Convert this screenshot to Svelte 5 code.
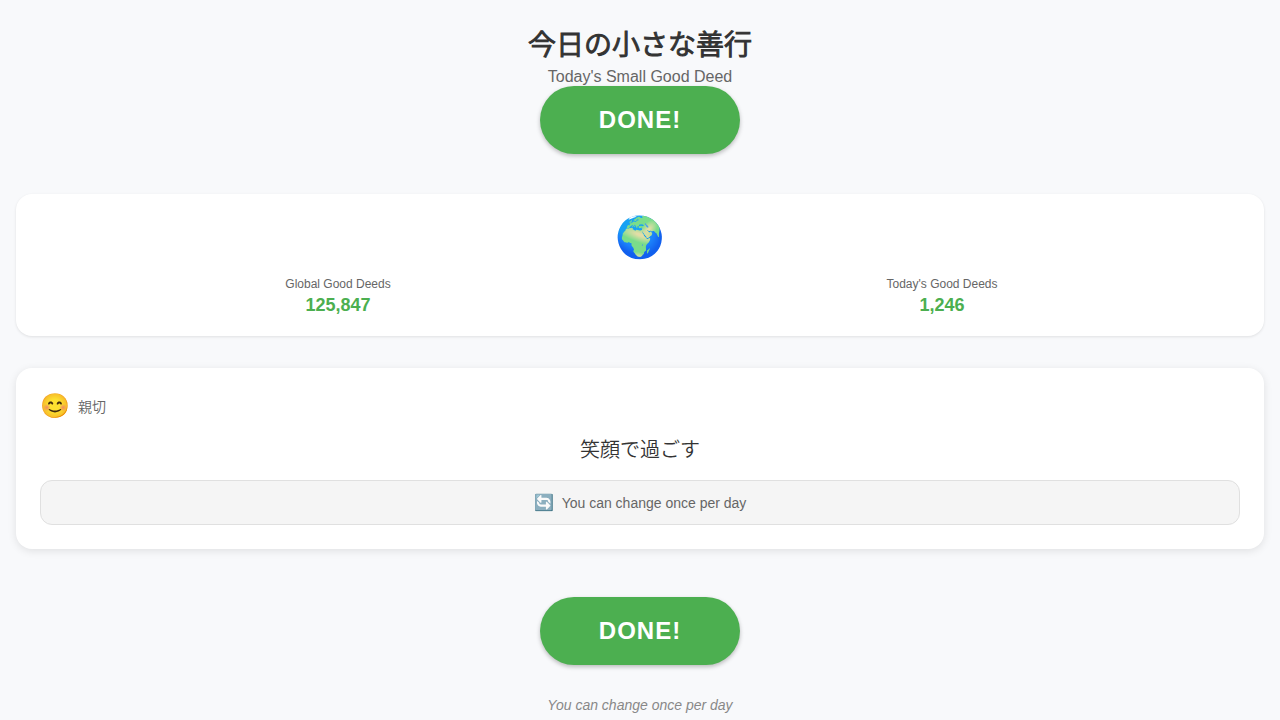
<script>
  let globalCount = $state(125847);
  let todayCount = $state(1246);
  let done = $state(false);

  function complete() {
    if (done) return;
    done = true;
    globalCount += 1;
    todayCount += 1;
  }
  const format = (n) => n.toLocaleString('en-US');
</script>

<main class="page">
  <header class="header">
    <h1 lang="ja">今日の小さな善行</h1>
    <p>Today's Small Good Deed</p>
  </header>

  <button class="done" type="button" onclick={complete}>DONE!</button>

  <section class="card stats">
    <div class="globe">🌍</div>
    <dl class="counts">
      <div class="count">
        <dt>Global Good Deeds</dt>
        <dd>{format(globalCount)}</dd>
      </div>
      <div class="count">
        <dt>Today's Good Deeds</dt>
        <dd>{format(todayCount)}</dd>
      </div>
    </dl>
  </section>

  <section class="card deed">
    <div class="category">
      <span class="face">😊</span>
      <span class="name" lang="ja">親切</span>
    </div>
    <h2 lang="ja">笑顔で過ごす</h2>
    <button class="change" type="button">
      <span class="arrows">🔄</span>
      <span>You can change once per day</span>
    </button>
  </section>

  <div class="bottom">
    <button class="done" type="button" onclick={complete}>DONE!</button>
    <p class="note">You can change once per day</p>
  </div>
</main>

<style>
  :global(body) {
    background: #f8f9fb;
  }
  .page {
    display: flex;
    flex-direction: column;
    align-items: center;
    padding: 24px 16px 0;
    color: #333;
    font-family: "Liberation Sans", "Noto Sans CJK JP", sans-serif;
  }
  h1, h2, p, dl, dd {
    margin: 0;
  }
  .header {
    text-align: center;
  }
  h1 {
    font-size: 28px;
    line-height: 44px;
    font-weight: 350;
    -webkit-text-stroke: 1px currentColor;
  }
  .header p {
    color: #666;
    font-size: 16px;
    line-height: 18px;
  }
  button {
    font-family: inherit;
    cursor: pointer;
  }
  .done {
    min-width: 200px;
    height: 68px;
    border: 0;
    border-radius: 34px;
    background: #4caf50;
    color: #fff;
    font-size: 24px;
    font-weight: 700;
    letter-spacing: 1px;
    box-shadow: 0 2px 4px rgba(0, 0, 0, 0.25);
  }
  .card {
    box-sizing: border-box;
    width: 100%;
    border-radius: 16px;
    background: #fff;
  }
  .stats {
    margin-top: 40px;
    padding: 16px 16px 18px;
    box-shadow: 0 1px 3px rgba(0, 0, 0, 0.1);
  }
  .globe {
    font-size: 40px;
    line-height: 54px;
    text-align: center;
  }
  .counts {
    display: grid;
    grid-template-columns: 1fr 1fr;
    margin-top: 12px;
    padding: 0 4px;
    text-align: center;
  }
  dt {
    color: #666;
    font-size: 12px;
    line-height: 16px;
  }
  dd {
    color: #4caf50;
    font-size: 18px;
    line-height: 26px;
    font-weight: 700;
  }
  .deed {
    margin-top: 32px;
    padding: 24px;
    box-shadow: 0 2px 8px rgba(0, 0, 0, 0.1);
  }
  .category {
    display: flex;
    align-items: center;
    gap: 8px;
  }
  .face {
    font-size: 24px;
    line-height: 28px;
  }
  .name {
    color: #666;
    font-family: "Noto Sans CJK JP", sans-serif;
    font-size: 14px;
    font-weight: 350;
    line-height: 20px;
  }
  h2 {
    margin: 16px 0;
    font-size: 20px;
    line-height: 28px;
    font-weight: 350;
    text-align: center;
  }
  .change {
    display: flex;
    align-items: center;
    justify-content: center;
    gap: 8px;
    width: 100%;
    padding: 12px 12px 11px;
    border: 1px solid #e0e0e0;
    border-radius: 12px;
    background: #f5f5f5;
    color: #666;
    font-size: 14px;
    line-height: 20px;
  }
  .arrows {
    font-size: 16px;
  }
  .bottom {
    display: flex;
    flex-direction: column;
    align-items: center;
    margin-top: 48px;
  }
  .note {
    margin-top: 30px;
    color: #888;
    font-size: 14px;
    line-height: 20px;
    font-style: italic;
  }
</style>
